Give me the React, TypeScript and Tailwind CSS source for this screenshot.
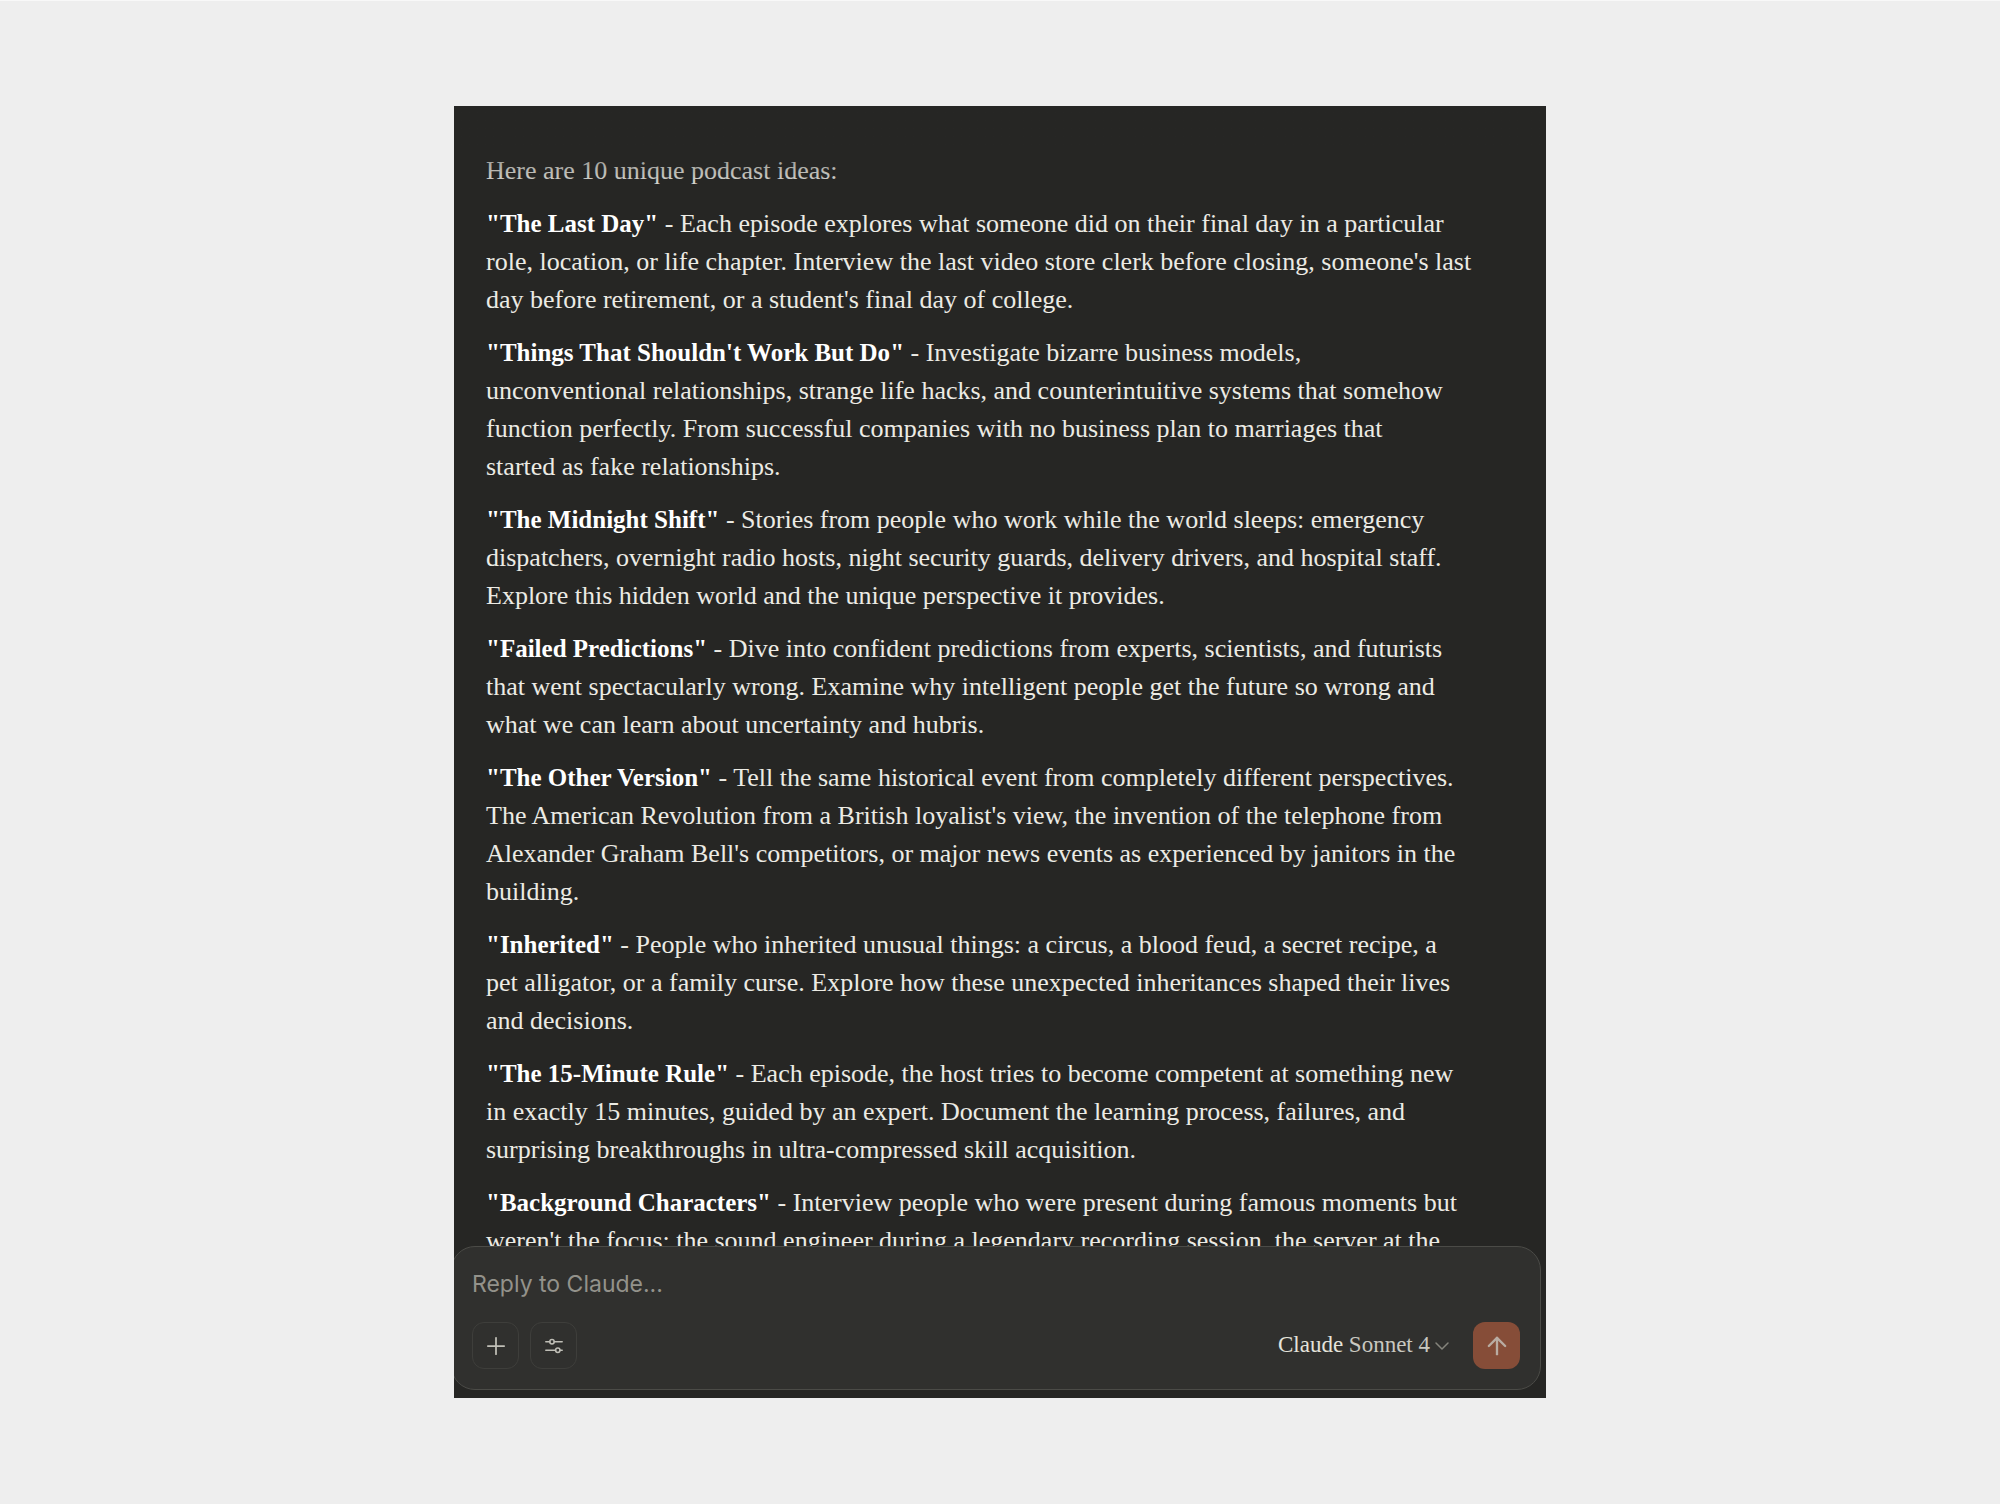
import { ArrowUp, ChevronDown, Plus } from "lucide-react";

type Idea = { title: string; lines: string[] };

const ideas: Idea[] = [
  {
    title: "The Last Day",
    lines: [
      "Each episode explores what someone did on their final day in a particular",
      "role, location, or life chapter. Interview the last video store clerk before closing, someone's last",
      "day before retirement, or a student's final day of college.",
    ],
  },
  {
    title: "Things That Shouldn't Work But Do",
    lines: [
      "Investigate bizarre business models,",
      "unconventional relationships, strange life hacks, and counterintuitive systems that somehow",
      "function perfectly. From successful companies with no business plan to marriages that",
      "started as fake relationships.",
    ],
  },
  {
    title: "The Midnight Shift",
    lines: [
      "Stories from people who work while the world sleeps: emergency",
      "dispatchers, overnight radio hosts, night security guards, delivery drivers, and hospital staff.",
      "Explore this hidden world and the unique perspective it provides.",
    ],
  },
  {
    title: "Failed Predictions",
    lines: [
      "Dive into confident predictions from experts, scientists, and futurists",
      "that went spectacularly wrong. Examine why intelligent people get the future so wrong and",
      "what we can learn about uncertainty and hubris.",
    ],
  },
  {
    title: "The Other Version",
    lines: [
      "Tell the same historical event from completely different perspectives.",
      "The American Revolution from a British loyalist's view, the invention of the telephone from",
      "Alexander Graham Bell's competitors, or major news events as experienced by janitors in the",
      "building.",
    ],
  },
  {
    title: "Inherited",
    lines: [
      "People who inherited unusual things: a circus, a blood feud, a secret recipe, a",
      "pet alligator, or a family curse. Explore how these unexpected inheritances shaped their lives",
      "and decisions.",
    ],
  },
  {
    title: "The 15-Minute Rule",
    lines: [
      "Each episode, the host tries to become competent at something new",
      "in exactly 15 minutes, guided by an expert. Document the learning process, failures, and",
      "surprising breakthroughs in ultra-compressed skill acquisition.",
    ],
  },
  {
    title: "Background Characters",
    lines: [
      "Interview people who were present during famous moments but",
      "weren't the focus: the sound engineer during a legendary recording session, the server at the",
    ],
  },
];

function SlidersIcon() {
  return (
    <svg viewBox="0 0 20 20" className="size-5" fill="none" stroke="currentColor" strokeWidth="1.5" strokeLinecap="round" aria-hidden="true">
      <path d="M1.8 5.7h4M10.2 5.7h8M1.8 14.3h9.8M16 14.3h2.2" />
      <circle cx="8" cy="5.7" r="2.2" />
      <circle cx="13.8" cy="14.3" r="2.2" />
    </svg>
  );
}

function IdeaText({ idea }: { idea: Idea }) {
  return (
    <p>
      <strong className="text-[25px] font-bold text-white">"{idea.title}"</strong> -{" "}
      {idea.lines.map((line, i) => (
        <span key={line}>
          {i > 0 && <br />}
          {line}
        </span>
      ))}
    </p>
  );
}

function Composer() {
  const toolButton =
    "flex size-[47px] items-center justify-center rounded-xl border border-[#3e3e3b] text-[#c0bfb7]";

  return (
    <form
      onSubmit={(e) => e.preventDefault()}
      className="-ml-[3px] mr-[5px] mb-2 flex flex-col gap-5 rounded-3xl border border-[#4b4b47] bg-[#30302e] px-5 pt-[19px] pb-5"
    >
      <input
        type="text"
        aria-label="Reply to Claude"
        placeholder="Reply to Claude..."
        className="h-9 w-full bg-transparent font-['Inter',sans-serif] text-[23px] text-[#e8e6dc] outline-none placeholder:text-[#93928b]"
      />
      <div className="flex items-center gap-[11px]">
        <button type="button" aria-label="Add content" className={toolButton}>
          <Plus className="size-7" strokeWidth={1.5} />
        </button>
        <button type="button" aria-label="Tools" className={toolButton}>
          <SlidersIcon />
        </button>
        <button type="button" className="ml-auto flex items-center text-[23px] text-[#c9c8c0]">
          <span>
            <span className="font-medium text-[#e4e3db]">Claude</span> Sonnet 4
          </span>
          <ChevronDown className="size-6 text-[#85847c]" strokeWidth={1.5} />
        </button>
        <button
          type="submit"
          aria-label="Send message"
          className="ml-2 flex size-[47px] items-center justify-center rounded-xl bg-[#864d38] text-[#b9aca2]"
        >
          <ArrowUp className="size-7" strokeWidth={2} />
        </button>
      </div>
    </form>
  );
}

export default function App() {
  return (
    <div className="flex h-screen justify-center border-t border-[#f8f8f8] bg-[#eeeeee] pt-[105px] pb-[106px]">
      <main className="flex w-full max-w-[1092px] flex-col overflow-hidden bg-[#262624] font-['Liberation_Serif',serif]">
        <div className="relative min-h-0 flex-1 overflow-hidden">
          <div className="flex flex-col gap-[15px] px-8 pt-[46px] text-[26px] leading-[38px] whitespace-nowrap text-[#ecebe4]">
            <p>Here are 10 unique podcast ideas:</p>
            {ideas.map((idea) => (
              <IdeaText key={idea.title} idea={idea} />
            ))}
          </div>
          <div className="pointer-events-none absolute inset-x-0 top-0 h-22 bg-linear-to-b from-[#262624] to-transparent" />
        </div>
        <Composer />
      </main>
    </div>
  );
}
